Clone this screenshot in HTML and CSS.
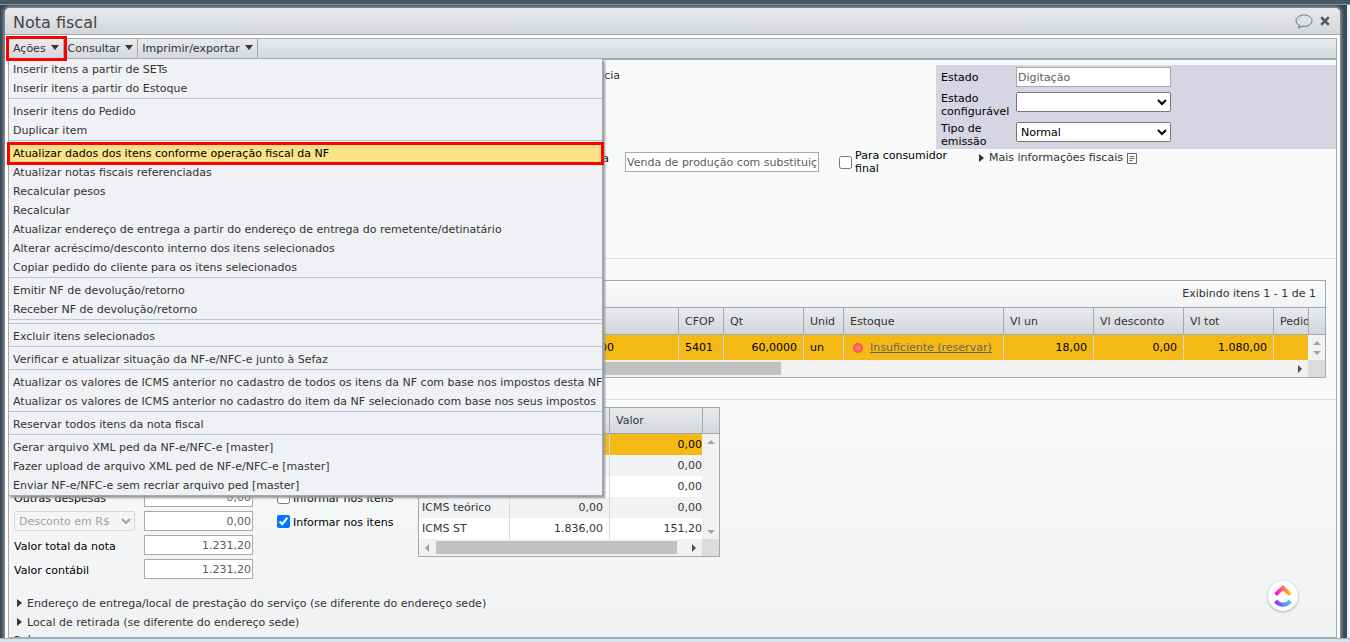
FILE: index.html
```html
<!DOCTYPE html>
<html lang="pt-BR">
<head>
  <meta charset="UTF-8">
  <meta name="viewport" content="width=device-width, initial-scale=1.0">
  <title>Nota fiscal</title>
  <link rel="stylesheet" href="styles.css">
</head>
<body>

<div class="topbar"></div>

<div class="desktop">
  <div class="window">
    <div class="window-header">
      <h1>Nota fiscal</h1>
      <button class="icon-btn" aria-label="Comentar">
        <svg width="18" height="15" viewBox="0 0 18 15" fill="none" stroke="#6d7074">
          <path d="M4.600 11.200C2.400 10.300 1 8.600 1 6.700 1 3.500 4.500 1 9 1s8 2.500 8 5.700-3.500 5.700-8 5.700c-.7 0-1.400-.1-2-.2L3.400 14z"/>
          <path d="M3 6c.3-1.700 2-2.800 4-3.200" stroke="#b4b7ba"/>
        </svg>
      </button>
      <button class="icon-btn" aria-label="Fechar">
        <svg width="10" height="10" viewBox="0 0 10 10" stroke="#55585c" stroke-width="2.6">
          <path d="M1.200 1.200l7.600 7.600M8.800 1.200L1.200 8.800"/>
        </svg>
      </button>
    </div>

    <div class="window-body">
      <div class="toolbar">
        <div class="dropdown">
          <button class="tool tool-marked">Ações <span class="caret"></span></button>
          <ul class="menu">
            <li>Inserir itens a partir de SETs</li>
            <li>Inserir itens a partir do Estoque</li>
            <li class="sep"></li>
            <li>Inserir itens do Pedido</li>
            <li>Duplicar item</li>
            <li class="sep"></li>
            <li class="selected">Atualizar dados dos itens conforme operação fiscal da NF</li>
            <li>Atualizar notas fiscais referenciadas</li>
            <li>Recalcular pesos</li>
            <li>Recalcular</li>
            <li>Atualizar endereço de entrega a partir do endereço de entrega do remetente/detinatário</li>
            <li>Alterar acréscimo/desconto interno dos itens selecionados</li>
            <li>Copiar pedido do cliente para os itens selecionados</li>
            <li class="sep"></li>
            <li>Emitir NF de devolução/retorno</li>
            <li>Receber NF de devolução/retorno</li>
            <li class="sep"></li>
            <li class="sep"></li>
            <li>Excluir itens selecionados</li>
            <li class="sep"></li>
            <li>Verificar e atualizar situação da NF-e/NFC-e junto à Sefaz</li>
            <li class="sep"></li>
            <li>Atualizar os valores de ICMS anterior no cadastro de todos os itens da NF com base nos impostos desta NF</li>
            <li>Atualizar os valores de ICMS anterior no cadastro do item da NF selecionado com base nos seus impostos</li>
            <li class="sep"></li>
            <li>Reservar todos itens da nota fiscal</li>
            <li class="sep"></li>
            <li>Gerar arquivo XML ped da NF-e/NFC-e [master]</li>
            <li>Fazer upload de arquivo XML ped de NF-e/NFC-e [master]</li>
            <li>Enviar NF-e/NFC-e sem recriar arquivo ped [master]</li>
          </ul>
        </div>
        <button class="tool">Consultar <span class="caret"></span></button>
        <button class="tool">Imprimir/exportar <span class="caret"></span></button>
      </div>

      <div class="content">
        <section class="general">
          <div class="general-top">
            <span class="ref-label">ncia</span>
            <div class="status">
              <label for="estado">Estado</label>
              <input id="estado" type="text" value="Digitação" readonly>
              <label for="configuravel">Estado configurável</label>
              <select id="configuravel"><option></option></select>
              <label for="emissao">Tipo de emissão</label>
              <select id="emissao"><option>Normal</option></select>
            </div>
          </div>
          <div class="operation">
            <label class="operation-label" for="operacao">a</label>
            <input id="operacao" type="text" value="Venda de produção com substituição" readonly>
            <div class="check consumer">
              <input id="consumidor" type="checkbox">
              <label for="consumidor">Para consumidor final</label>
            </div>
            <a class="expand" href="#"><span class="arrow"></span>Mais informações fiscais
              <svg width="10" height="11" viewBox="0 0 10 11" fill="none" stroke="#666">
                <path d="M.5.5h9v10h-9zM2.500 3.500h5M2.500 5.500h5M2.500 7.500h3"/>
              </svg>
            </a>
          </div>
        </section>

        <section class="items">
          <div class="grid">
            <div class="grid-info">Exibindo itens 1 - 1 de 1</div>
            <table>
              <colgroup>
                <col>
                <col class="w45"><col class="w80"><col class="w40"><col class="w160">
                <col class="w90"><col class="w90"><col class="w90"><col class="w35"><col class="gutter">
              </colgroup>
              <thead>
                <tr>
                  <th></th><th>CFOP</th><th>Qt</th><th>Unid</th><th>Estoque</th>
                  <th>Vl un</th><th>Vl desconto</th><th>Vl tot</th><th>Pedid</th><th></th>
                </tr>
              </thead>
              <tbody>
                <tr class="active">
                  <td class="cut">00</td>
                  <td>5401</td>
                  <td class="num">60,0000</td>
                  <td>un</td>
                  <td><span class="dot"></span><a href="#">Insuficiente (reservar)</a></td>
                  <td class="num">18,00</td>
                  <td class="num">0,00</td>
                  <td class="num">1.080,00</td>
                  <td></td>
                  <td class="vscroll"><div class="vscroll-arrows"><span class="up"></span><span class="down"></span></div></td>
                </tr>
              </tbody>
            </table>
            <div class="hscroll">
              <div class="track"><div class="thumb thumb-items"></div></div>
              <span class="right"></span>
              <div class="corner"></div>
            </div>
          </div>
        </section>

        <section class="totals">
          <div class="form">
            <label for="despesas">Outras despesas</label>
            <input id="despesas" class="amount edit" type="text" value="0,00">
            <div class="check">
              <input id="inf1" type="checkbox">
              <label for="inf1">Informar nos itens</label>
            </div>

            <select aria-label="Tipo de desconto" disabled><option>Desconto em R$</option></select>
            <input class="amount" type="text" value="0,00" aria-label="Desconto" readonly>
            <div class="check">
              <input id="inf2" type="checkbox" checked>
              <label for="inf2">Informar nos itens</label>
            </div>

            <label for="total">Valor total da nota</label>
            <input id="total" class="amount" type="text" value="1.231,20" readonly>
            <span></span>

            <label for="contabil">Valor contábil</label>
            <input id="contabil" class="amount" type="text" value="1.231,20" readonly>
            <span></span>
          </div>

          <div class="grid taxes">
            <table>
              <colgroup>
                <col class="w90"><col class="w100"><col><col class="gutter">
              </colgroup>
              <thead>
                <tr><th></th><th></th><th>Valor</th><th></th></tr>
              </thead>
              <tbody>
                <tr class="active">
                  <td></td><td class="num">0,00</td><td class="num">0,00</td>
                  <td class="vscroll" rowspan="5"><div class="vscroll-arrows"><span class="up"></span><span class="down"></span></div></td>
                </tr>
                <tr class="alt"><td></td><td class="num">0,00</td><td class="num">0,00</td></tr>
                <tr><td></td><td class="num">0,00</td><td class="num">0,00</td></tr>
                <tr class="alt"><td>ICMS teórico</td><td class="num">0,00</td><td class="num">0,00</td></tr>
                <tr><td>ICMS ST</td><td class="num">1.836,00</td><td class="num">151,20</td></tr>
              </tbody>
            </table>
            <div class="hscroll">
              <span class="left"></span>
              <div class="track"><div class="thumb"></div></div>
              <span class="right"></span>
              <div class="corner"></div>
            </div>
          </div>
        </section>

        <section class="extras">
          <a class="expand" href="#"><span class="arrow"></span>Endereço de entrega/local de prestação do serviço (se diferente do endereço sede)</a>
          <a class="expand" href="#"><span class="arrow"></span>Local de retirada (se diferente do endereço sede)</a>
          <h2>Cobrança</h2>
        </section>
      </div>
    </div>
  </div>
</div>

<div class="footer"></div>

<button class="clickup" aria-label="ClickUp">
  <svg width="18" height="22" viewBox="0 0 18 22" fill="none" stroke-width="4">
    <defs>
      <linearGradient id="warm"><stop offset="0" stop-color="#ff02f0"/><stop offset=".5" stop-color="#ff6b6b"/><stop offset="1" stop-color="#ffc800"/></linearGradient>
      <linearGradient id="cool"><stop offset="0" stop-color="#8930fd"/><stop offset="1" stop-color="#49ccf9"/></linearGradient>
    </defs>
    <path d="M1.600 9.600L9 2.800l7.400 6.800" stroke="url(#warm)"/>
    <path d="M1.600 16c4 5 10.800 5 14.800 0" stroke="url(#cool)"/>
  </svg>
</button>

</body>
</html>
```
FILE: styles.css
```css
* {
  box-sizing: border-box;
}
body {
  margin: 0;
  height: 100vh;
  display: flex;
  flex-direction: column;
  overflow: hidden;
  font: 11px/13px Verdana, "DejaVu Sans", sans-serif;
  color: #000;
}
input, select, button {
  font: inherit;
  margin: 0;
}
a {
  color: #333;
  text-decoration: none;
}

/* window */
.topbar {
  flex: none;
  height: 5px;
  background: #455a64;
  border-bottom: 1px solid #8a969b;
}
.desktop {
  flex: 1;
  min-height: 0;
  display: flex;
  padding: 3px 7px 0 5px;
  background: #34495e;
  border-right: 3px solid #f0f1f3;
}
.window {
  flex: 1;
  min-width: 0;
  display: flex;
  flex-direction: column;
  background: #fff;
  border-radius: 5px 5px 0 0;
  box-shadow: 0 0 3px 2px #8c8c8c;
}
.window-header {
  flex: none;
  height: 27px;
  display: flex;
  align-items: center;
  gap: 7px;
  padding: 0 10px 0 8px;
  border-bottom: 1px solid #a2a9b1;
  border-radius: 5px 5px 0 0;
  background: linear-gradient(#e9eaec, #d3d6da);
}
h1 {
  flex: 1;
  margin: 0;
  padding-top: 4px;
  font-size: 16px;
  line-height: 20px;
  font-weight: normal;
  color: #444;
}
.icon-btn {
  display: flex;
  padding: 0;
  border: 0;
  background: none;
}
.window-body {
  flex: 1;
  min-height: 0;
  display: flex;
  flex-direction: column;
  margin: 3px 3px 0;
  border: 1px solid #a2a9b1;
}

/* toolbar and menu */
.toolbar {
  flex: none;
  height: 21px;
  display: flex;
  border-bottom: 2px solid #a2a9b1;
  background: linear-gradient(#e9eaec, #d5d8dc);
}
.dropdown {
  position: relative;
  display: flex;
}
.tool {
  display: flex;
  align-items: center;
  gap: 5px;
  padding: 0 4px;
  border: 0;
  border-right: 1px solid #a2a9b1;
  background: none;
  color: #333;
}
.tool-marked {
  position: relative;
  z-index: 3;
  outline: 3px solid #f00;
}
.caret {
  margin-bottom: 3px;
  border: 4px solid transparent;
  border-top: 5px solid #333;
  border-bottom: 0;
}
.menu {
  position: absolute;
  z-index: 2;
  top: 20px;
  left: -1px;
  width: max-content;
  margin: 0;
  padding: 1px 0 0;
  list-style: none;
  background: #f0f1f4;
  border: 1px solid #a2a9b1;
  border-top: 0;
  box-shadow: 2px 2px 2px #999;
  color: #333;
  white-space: nowrap;
}
.menu li {
  height: 19px;
  padding-left: 4px;
  line-height: 20px;
}
.menu .sep {
  height: 1px;
  margin-bottom: 3px;
  background: #bcc5cf;
}
.menu .selected {
  background: #fbe187;
  color: #000;
  outline: 3px solid #f00;
  outline-offset: -1px;
}

/* content */
.content {
  flex: 1;
  min-height: 0;
  overflow: hidden;
  background: linear-gradient(#f8faf9 60%, #f1f2f4);
}
.content input[type="text"] {
  height: 20px;
  padding: 1px;
  border: 1px solid #a9a9a9;
  border-radius: 0;
  background: #fff;
  color: #5c5c5c;
}
.content select {
  height: 20px;
}
.general {
  height: 199px;
  padding-top: 5px;
  border-bottom: 1px solid #dcdfe0;
}
.general-top {
  display: flex;
  justify-content: space-between;
}
.ref-label {
  width: 611px;
  padding-top: 4px;
  text-align: right;
  color: #333;
}
.status {
  width: 400px;
  display: grid;
  grid-template-columns: 70px 155px;
  grid-template-rows: 21px;
  gap: 4px 5px;
  padding: 2px 5px 1px;
  background: #d6d5e3;
}
.status label:first-child {
  padding-top: 4px;
}
.operation {
  display: flex;
}
.operation-label {
  width: 600px;
  padding-top: 3px;
  text-align: right;
}
#operacao {
  width: 194px;
  margin: 3px 20px 0 16px;
}
.check {
  display: flex;
  align-items: center;
  gap: 3px;
}
.check input {
  flex: none;
  width: 13px;
  height: 13px;
}
.consumer {
  width: 140px;
  padding-right: 20px;
}
.expand {
  display: flex;
  align-items: center;
  height: 19px;
}
.operation .expand {
  height: 17px;
}
.arrow {
  margin-right: 5px;
  border: 4px solid transparent;
  border-left: 5px solid #333;
  border-right: 0;
}
.expand svg {
  margin: 2px 0 0 4px;
}

/* grids */
.items {
  padding: 21px 10px 21px 5px;
  border-bottom: 1px solid #dcdfe0;
}
.grid {
  border: 1px solid #a2a9b1;
  background: #fff;
}
.grid-info {
  height: 26px;
  padding: 6px 9px 0 0;
  text-align: right;
  color: #333;
  background: linear-gradient(#fafafa, #f2f3f5);
}
table {
  width: 100%;
  table-layout: fixed;
  border-collapse: separate;
  border-spacing: 0;
}
.w35 { width: 35px; }
.w40 { width: 40px; }
.w45 { width: 45px; }
.w80 { width: 80px; }
.w90 { width: 90px; }
.w100 { width: 100px; }
.w160 { width: 160px; }
.gutter { width: 17px; }
th {
  height: 28px;
  padding: 0 0 0 6px;
  overflow: hidden;
  text-align: left;
  font-weight: normal;
  white-space: nowrap;
  color: #333;
  border: 1px solid #a2a9b1;
  border-width: 1px 0 1px 1px;
  background: linear-gradient(#e9eaec, #d3d6da);
}
td {
  height: 25px;
  padding: 0 6px;
  white-space: nowrap;
  border-left: 1px solid #d5d7da;
}
th:first-child, td:first-child {
  border-left: 0;
}
.active td {
  background: #f5b915;
}
.items .cut {
  padding-right: 64px;
  text-align: right;
}
.num {
  text-align: right;
}
td a {
  color: #666;
  text-decoration: underline;
}
.dot {
  display: inline-block;
  width: 10px;
  height: 10px;
  margin: 0 7px 0 3px;
  vertical-align: -2px;
  border-radius: 50%;
  background: radial-gradient(#ff8080, #ff3b30);
}
.grid .vscroll {
  height: 1px;
  padding: 0;
  border: 0;
  background: #f1f1f1;
}
.vscroll-arrows {
  height: 100%;
  display: flex;
  flex-direction: column;
  justify-content: space-between;
  align-items: center;
  padding: 6px 0 5px;
}
.up, .down {
  border: 4px solid transparent;
}
.up {
  border-top: 0;
  border-bottom-color: #a3a3a3;
}
.down {
  border-bottom: 0;
  border-top-color: #a3a3a3;
}
.hscroll {
  height: 17px;
  display: flex;
  align-items: center;
  background: #f1f1f1;
}
.track {
  flex: 1;
  margin-right: 6px;
}
.thumb {
  height: 13px;
  margin-right: 9px;
  background: #c1c1c1;
}
.thumb-items {
  width: 60%;
}
.left, .right {
  border: 4px solid transparent;
}
.left {
  margin: 0 7px 0 6px;
  border-left: 0;
  border-right-color: #a3a3a3;
}
.right {
  margin-right: 6px;
  border-right: 0;
  border-left-color: #505050;
}
.corner {
  width: 17px;
  height: 17px;
  background: #dcdcdc;
}

/* totals */
.totals {
  display: flex;
  align-items: flex-start;
  padding: 7px 0 0 5px;
}
.form {
  width: 404px;
  display: grid;
  grid-template-columns: 121px 109px 1fr;
  grid-auto-rows: 20px;
  gap: 4px 9px;
  align-items: center;
  padding-top: 80px;
}
.form .check {
  padding-left: 15px;
}
.form > label, .form .check label {
  padding-top: 2px;
}
.content .amount {
  width: 109px;
  text-align: right;
}
.content .edit {
  color: #000;
}
.taxes {
  width: 302px;
  color: #333;
}
.taxes th {
  height: 26px;
  border-top: 0;
}
.taxes td {
  height: 21px;
  padding: 0 6px 0 3px;
}
.taxes td:nth-child(3) {
  padding-right: 0;
}
.taxes .active {
  color: #000;
}
.alt td {
  background: #f1f2f4;
}
.extras {
  padding: 15px 8px 0;
}
.extras .arrow {
  margin-bottom: 2px;
}
h2 {
  margin: 2px -5px 0;
  font-size: 12px;
  line-height: 14px;
  font-weight: normal;
  color: #333;
}

.footer {
  flex: none;
  height: 4px;
  border-top: 1px solid #a2b0bd;
  background: #d3e2ef;
}
.clickup {
  position: fixed;
  right: 52px;
  bottom: 31px;
  width: 30px;
  height: 30px;
  display: flex;
  align-items: center;
  justify-content: center;
  padding: 0;
  border: 0;
  border-radius: 50%;
  background: #fff;
  box-shadow: 0 1px 3px #aaa;
}
```
